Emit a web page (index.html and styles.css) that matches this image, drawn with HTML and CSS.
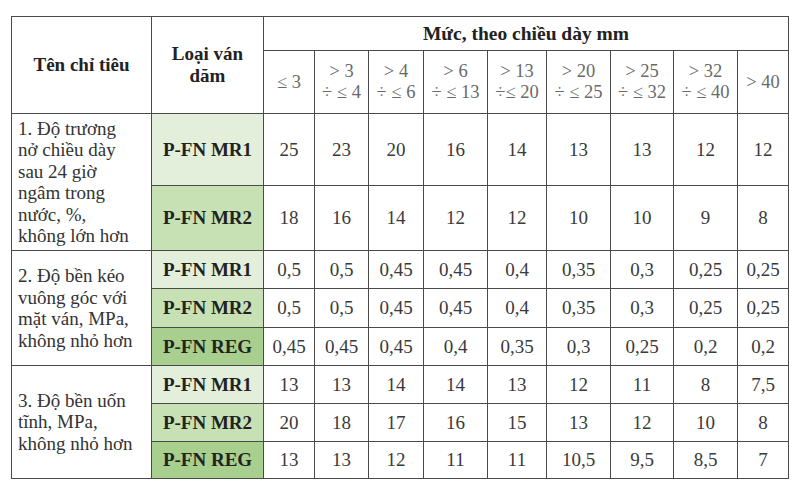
FILE: index.html
```html
<!DOCTYPE html>
<html lang="vi">
<head>
<meta charset="utf-8">
<link rel="stylesheet" href="styles.css">
</head>
<body>
<table class="spec">
  <colgroup>
    <col class="c-name"><col class="c-type">
    <col class="c51"><col class="c54"><col class="c55"><col class="c64"><col class="c59"><col class="c64"><col class="c63"><col class="c64"><col class="c51">
  </colgroup>
  <tr class="h1">
    <th rowspan="2" class="th-main">Tên chỉ tiêu</th>
    <th rowspan="2" class="th-main">Loại ván<br>dăm</th>
    <th colspan="9" class="th-main th-wide">Mức, theo chiều dày mm</th>
  </tr>
  <tr class="h2">
    <th class="rng lt">≤ 3</th>
    <th class="rng">&gt; 3<br>÷ ≤ 4</th>
    <th class="rng lt">&gt; 4<br>÷ ≤ 6</th>
    <th class="rng">&gt; 6<br>÷ ≤ 13</th>
    <th class="rng">&gt; 13<br>÷≤ 20</th>
    <th class="rng lt">&gt; 20<br>÷ ≤ 25</th>
    <th class="rng lt">&gt; 25<br>÷ ≤ 32</th>
    <th class="rng">&gt; 32<br>÷ ≤ 40</th>
    <th class="rng">&gt; 40</th>
  </tr>
  <tr class="r72">
    <td rowspan="2" class="name">1. Độ trương<br>nở chiều dày<br>sau 24 giờ<br>ngâm trong<br>nước, %,<br>không lớn hơn</td>
    <td class="type mr1">P-FN MR1</td>
    <td class="lt">25</td><td>23</td><td class="lt">20</td><td>16</td><td>14</td><td class="lt">13</td><td class="lt">13</td><td>12</td><td>12</td>
  </tr>
  <tr class="r65 toplt">
    <td class="type mr2">P-FN MR2</td>
    <td class="lt">18</td><td>16</td><td class="lt">14</td><td>12</td><td>12</td><td class="lt">10</td><td class="lt">10</td><td>9</td><td>8</td>
  </tr>
  <tr class="r38">
    <td rowspan="3" class="name">2. Độ bền kéo<br>vuông góc với<br>mặt ván, MPa,<br>không nhỏ hơn</td>
    <td class="type mr1">P-FN MR1</td>
    <td class="lt">0,5</td><td>0,5</td><td class="lt">0,45</td><td>0,45</td><td>0,4</td><td class="lt">0,35</td><td class="lt">0,3</td><td>0,25</td><td>0,25</td>
  </tr>
  <tr class="r39">
    <td class="type mr2">P-FN MR2</td>
    <td class="lt">0,5</td><td>0,5</td><td class="lt">0,45</td><td>0,45</td><td>0,4</td><td class="lt">0,35</td><td class="lt">0,3</td><td>0,25</td><td>0,25</td>
  </tr>
  <tr class="r38 toplt">
    <td class="type reg">P-FN REG</td>
    <td class="lt">0,45</td><td>0,45</td><td class="lt">0,45</td><td>0,4</td><td>0,35</td><td class="lt">0,3</td><td class="lt">0,25</td><td>0,2</td><td>0,2</td>
  </tr>
  <tr class="r38">
    <td rowspan="3" class="name">3. Độ bền uốn<br>tĩnh, MPa,<br>không nhỏ hơn</td>
    <td class="type mr1">P-FN MR1</td>
    <td class="lt">13</td><td>13</td><td class="lt">14</td><td>14</td><td>13</td><td class="lt">12</td><td class="lt">11</td><td>8</td><td>7,5</td>
  </tr>
  <tr class="r38">
    <td class="type mr2">P-FN MR2</td>
    <td class="lt">20</td><td>18</td><td class="lt">17</td><td>16</td><td>15</td><td class="lt">13</td><td class="lt">12</td><td>10</td><td>8</td>
  </tr>
  <tr class="r37">
    <td class="type reg">P-FN REG</td>
    <td class="lt">13</td><td>13</td><td class="lt">12</td><td>11</td><td>11</td><td class="lt">10,5</td><td class="lt">9,5</td><td>8,5</td><td>7</td>
  </tr>
</table>
</body>
</html>
```

FILE: styles.css
```css
html, body {
  margin: 0;
  padding: 0;
  background: #ffffff;
}

body {
  font-family: "Liberation Serif", "Times New Roman", serif;
  color: #3a3a3a;
}

.spec {
  margin: 16px 0 0 11px;
  border-collapse: collapse;
  table-layout: fixed;
  width: 778px;
  border: 1px solid #8a8a8a;
  font-family: "Liberation Serif", "Times New Roman", serif;
}

.c-name { width: 140px; }
.c-type { width: 112px; }
.c51 { width: 51px; }
.c54 { width: 54px; }
.c55 { width: 55px; }
.c59 { width: 59px; }
.c63 { width: 63px; }
.c64 { width: 64px; }

.spec th,
.spec td {
  font-family: "Liberation Serif", "Times New Roman", serif;
  border: 1px solid #4a4a4a;
  padding: 0;
  text-align: center;
  vertical-align: middle;
  font-size: 19px;
  line-height: 22px;
  color: #3a3a3a;
}

.spec td.lt,
.spec th.lt {
  border-left-color: #a8a8a8;
}

.spec tr.toplt td {
  border-top-color: #b0b0b0;
}

.spec tr.toplt td.type {
  border-top-color: #4a4a4a;
}

.h1 { height: 34px; }
.h2 { height: 63px; }
.r72 { height: 72px; }
.r65 { height: 65px; }
.r38 { height: 38px; }
.r39 { height: 39px; }
.r37 { height: 37px; }

.spec .th-main {
  font-weight: bold;
  font-size: 19px;
  line-height: 22px;
  color: #222;
}

.spec .th-wide {
  font-size: 19.5px;
}

.spec .rng {
  font-weight: normal;
  color: #6a6a6a;
  font-size: 18.5px;
  line-height: 21px;
}

.spec .name {
  text-align: left;
  padding: 0 2px 0 6px;
  font-size: 19px;
  line-height: 21.5px;
  color: #333;
}

.spec .type {
  font-weight: bold;
  font-size: 19px;
  color: #222;
}

.mr1 { background: #e3efdb; }
.mr2 { background: #c7e0b4; }
.reg { background: #a9cf8e; }
```
